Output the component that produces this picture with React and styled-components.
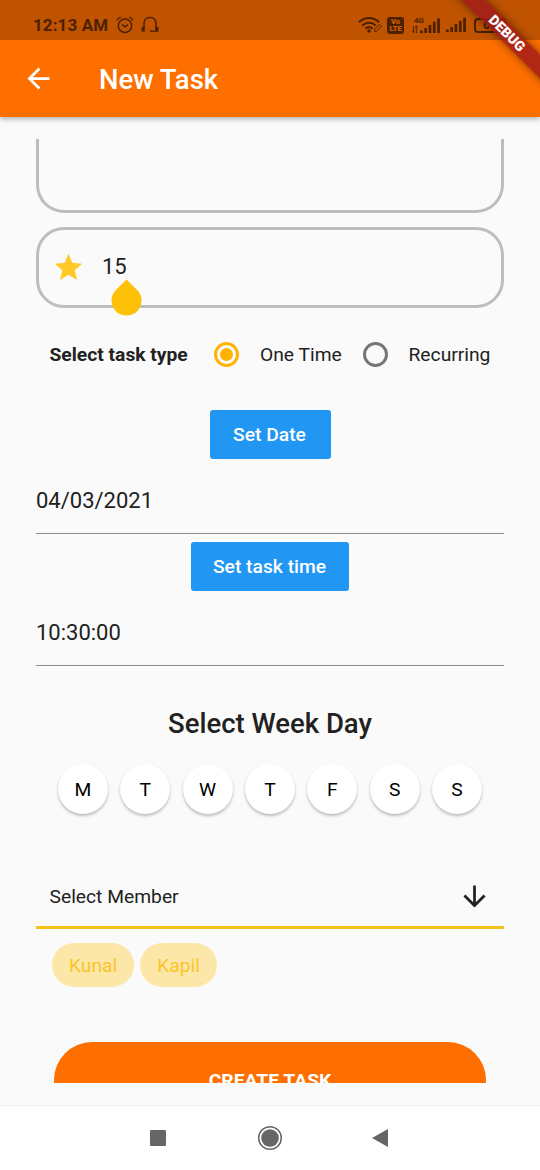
import React, { useState } from 'react'
import styled, { createGlobalStyle } from 'styled-components'
import { MdArrowBack, MdArrowDownward, MdStar } from 'react-icons/md'

const weekDays = ['M', 'T', 'W', 'T', 'F', 'S', 'S']
const members = ['Kunal', 'Kapil']
const taskTypes = ['One Time', 'Recurring']

const AlarmIcon = () => (
  <svg width='18' height='18' viewBox='0 0 18 18' fill='none' stroke='currentColor' strokeWidth='1.5'>
    <circle cx='9' cy='9.7' r='6.7' />
    <path d='M6 8.6l3 2.2 3-2.2' />
    <path d='M1 4.4Q2 2 4.8 1.1M17 4.4Q16 2 13.2 1.1' />
  </svg>
)

const HeadsetIcon = () => (
  <svg width='18' height='18' viewBox='0 0 18 18' fill='none' stroke='currentColor' strokeWidth='1.5'>
    <path d='M3 13V7.4C3 3.6 5.6 1.4 9 1.4s6 2.2 6 6V13' />
    <path d='M1.4 11v4.5M2.8 10.8v5M16.6 11v4.5M15.2 10.8v5' strokeWidth='1.7' />
    <path d='M15 15.2h-4.6' strokeWidth='1.2' />
    <circle cx='9.8' cy='15.3' r='1' fill='currentColor' stroke='none' />
  </svg>
)

const WifiIcon = () => (
  <svg width='25' height='18' viewBox='0 0 25 18' fill='none' stroke='currentColor' strokeWidth='2.1'>
    <path d='M1 6.2C7 .6 15.4 .6 21 6.2' />
    <path d='M4.3 9.5C8.3 5.9 13.7 5.9 17.7 9.5' />
    <path d='M7.5 12.6C9.7 10.7 12.3 10.7 14.5 12.6' />
    <circle cx='11' cy='15' r='1.7' fill='currentColor' stroke='none' />
    <path d='M16.5 15.5v-2.3l4.8-4.6 2 1.9-4.8 4.7z' strokeWidth='1' />
  </svg>
)

const SignalIcon = () => (
  <svg width='20' height='16' viewBox='0 0 20 16' fill='currentColor'>
    <rect x='0' y='12.5' width='2.7' height='2.5' />
    <rect x='4.3' y='10' width='2.7' height='5' />
    <rect x='8.6' y='7' width='2.7' height='8' />
    <rect x='12.9' y='3.8' width='2.7' height='11.2' />
    <rect x='17.2' y='0.5' width='2.7' height='14.5' />
  </svg>
)

const DataArrows = () => (
  <svg width='6' height='8' viewBox='0 0 6 8' fill='none' stroke='currentColor' strokeWidth='1'>
    <path d='M1.5 8V1.5M.2 5.8L1.5 7.5M4.3 8V1M3 2.5L4.3 .8 5.8 2.5' />
  </svg>
)

const App = () => {
  const [taskType, setTaskType] = useState('One Time')

  return (
    <Screen>
      <GlobalStyle />
      {/* status bar */}
      <StatusBar>
        <Clock>12:13 AM</Clock>
        <AlarmIcon />
        <HeadsetIcon />
        <StatusRight>
          <WifiIcon />
          <Volte>
            <span>Vo</span>
            <span>LTE</span>
          </Volte>
          <Network>
            <NetworkLabel>
              4G
              <DataArrows />
            </NetworkLabel>
            <SignalIcon />
          </Network>
          <SignalIcon />
          <Battery>60</Battery>
        </StatusRight>
      </StatusBar>

      {/* app bar */}
      <AppBar>
        <MdArrowBack size={33} />
        <h1>New Task</h1>
      </AppBar>

      {/* form */}
      <Form onSubmit={e => e.preventDefault()}>
        <OutlinedBox $cut />
        <OutlinedBox>
          <MdStar size={33} color='#ffca28' />
          <Points>
            15
            <CursorHandle viewBox='0 0 30 37'>
              <path d='M15 .4L25.6 11A15 15 0 1 1 4.4 11z' fill='#ffc107' />
            </CursorHandle>
          </Points>
        </OutlinedBox>

        <TypeRow>
          <strong>Select task type</strong>
          {taskTypes.map(type => (
            <TypeOption key={type} onClick={() => setTaskType(type)}>
              <Radio $checked={taskType === type} />
              {type}
            </TypeOption>
          ))}
        </TypeRow>

        <BlueButton type='button' $width='121px'>Set Date</BlueButton>
        <DateField>04/03/2021</DateField>
        <BlueButton type='button' $width='158px'>Set task time</BlueButton>
        <DateField>10:30:00</DateField>

        {/* week days */}
        <WeekTitle>Select Week Day</WeekTitle>
        <WeekRow>
          {weekDays.map((day, index) => (
            <DayButton key={index} type='button'>{day}</DayButton>
          ))}
        </WeekRow>

        {/* members */}
        <MemberSelect>
          Select Member
          <MdArrowDownward size={33} />
        </MemberSelect>
        <Chips>
          {members.map(name => (
            <Chip key={name}>{name}</Chip>
          ))}
        </Chips>

        <CreateButton type='submit'>CREATE TASK</CreateButton>
      </Form>

      {/* system navigation */}
      <NavBar>
        <svg width='16' height='16'><rect width='16' height='16' rx='1' fill='#666' /></svg>
        <svg width='26' height='26'>
          <circle cx='13' cy='13' r='11.3' fill='none' stroke='#666' strokeWidth='1.5' />
          <circle cx='13' cy='13' r='8.8' fill='#666' />
        </svg>
        <svg width='16' height='18'><path d='M0 9L16 0v18z' fill='#666' /></svg>
      </NavBar>

      <Ribbon>DEBUG</Ribbon>
    </Screen>
  )
}

const GlobalStyle = createGlobalStyle`
  * {
    box-sizing: border-box;
  }
  body {
    margin: 0;
    background: #fafafa;
  }
  button {
    font-family: inherit;
    border: none;
    padding: 0;
    cursor: pointer;
  }
  svg {
    display: block;
    flex-shrink: 0;
  }
`

const Screen = styled.div`
  position: relative;
  display: flex;
  flex-direction: column;
  width: 540px;
  height: 1170px;
  overflow: hidden;
  background: #fafafa;
  color: #212121;
  font-family: Roboto, 'Liberation Sans', sans-serif;
  font-size: 19.25px;
`

const StatusBar = styled.div`
  display: flex;
  align-items: center;
  height: 40px;
  padding: 10px 34px 0 33px;
  background: #bf5300;
  color: #4d2100;
  z-index: 1;
`

const Clock = styled.span`
  width: 75px;
  margin-right: 8px;
  font-size: 17px;
  font-weight: 700;
  letter-spacing: 0.1px;
  white-space: nowrap;

  & + svg {
    margin-right: 7px;
  }
`

const StatusRight = styled.div`
  display: flex;
  align-items: center;
  gap: 6px;
  margin-left: auto;
`

const Volte = styled.div`
  display: flex;
  flex-direction: column;
  justify-content: center;
  align-items: center;
  width: 17px;
  height: 17px;
  margin: 0 2px 0 -2px;
  border-radius: 3px;
  background: #4d2100;
  color: #d65d00;
  font-size: 7.5px;
  font-weight: 900;
  line-height: 7.5px;
`

const Network = styled.div`
  display: flex;
  align-items: flex-end;
`

const NetworkLabel = styled.div`
  display: flex;
  flex-direction: column;
  width: 8px;
  height: 17px;
  font-size: 8px;
  font-weight: 700;
  line-height: 8px;
  white-space: nowrap;
  text-indent: 2px;
`

const Battery = styled.div`
  width: 32px;
  height: 15px;
  margin-left: 2px;
  padding-left: 7px;
  border: 2px solid #4d2100;
  border-radius: 4px;
  font-size: 12px;
  font-weight: 700;
  line-height: 11px;
`

const AppBar = styled.header`
  display: flex;
  align-items: center;
  height: 77px;
  padding-left: 22px;
  background: #ff6f00;
  color: #fff;
  box-shadow: 0 2px 5px rgba(0, 0, 0, 0.3);

  h1 {
    margin: 2px 0 0 44px;
    font-size: 27.5px;
    font-weight: 500;
  }
`

const Form = styled.form`
  display: flex;
  flex-direction: column;
  height: 944px;
  margin-top: 22px;
  padding: 0 36px;
  overflow: hidden;

  & > * {
    flex-shrink: 0;
  }
`

const OutlinedBox = styled.div`
  display: flex;
  align-items: center;
  height: ${({ $cut }) => ($cut ? '74px' : '81px')};
  margin-bottom: ${({ $cut }) => ($cut ? '14px' : '0')};
  padding-left: 13px;
  border: 3px solid #bdbdbd;
  border-top-width: ${({ $cut }) => ($cut ? '0' : '3px')};
  border-radius: ${({ $cut }) => ($cut ? '0 0 28px 28px' : '28px')};
`

const Points = styled.div`
  position: relative;
  margin: -3px 0 0 17px;
  font-size: 22px;
`

const CursorHandle = styled.svg`
  position: absolute;
  top: 25px;
  left: 9px;
  width: 31px;
  height: 37px;
`

const TypeRow = styled.div`
  display: flex;
  align-items: center;
  height: 94px;
  padding: 0 0 1px 13.5px;

  strong {
    flex-shrink: 0;
    width: 164.5px;
    font-weight: 700;
  }
`

const TypeOption = styled.label`
  display: flex;
  align-items: center;
  gap: 21px;
  flex-shrink: 0;
  width: 148.5px;
  white-space: nowrap;
`

const Radio = styled.span`
  display: flex;
  align-items: center;
  justify-content: center;
  width: 25px;
  height: 25px;
  border: 3px solid ${({ $checked }) => ($checked ? '#ffb300' : '#757575')};
  border-radius: 50%;

  &::after {
    content: '';
    width: 13px;
    height: 13px;
    border-radius: 50%;
    background: ${({ $checked }) => ($checked ? '#ffb300' : 'transparent')};
  }
`

const BlueButton = styled.button`
  align-self: center;
  width: ${({ $width }) => $width};
  height: 49px;
  margin-top: 8px;
  padding-right: 1px;
  border-radius: 3px;
  background: #2196f3;
  color: #fff;
  font-size: 19.25px;
  font-weight: 500;
`

const DateField = styled.div`
  height: 75px;
  padding-top: 29px;
  border-bottom: 1px solid #8c8c8c;
  font-size: 22px;
  line-height: 26px;
`

const WeekTitle = styled.h2`
  margin: 41px 0 25px;
  font-size: 27.5px;
  font-weight: 500;
  line-height: 33px;
  text-align: center;
`

const WeekRow = styled.div`
  display: flex;
  justify-content: space-between;
  margin-top: -1px;
  padding: 0 22px;
`

const DayButton = styled.button`
  width: 50px;
  height: 50px;
  border-radius: 50%;
  background: #fff;
  color: #000;
  font-size: 19.25px;
  box-shadow: 0 2px 3px rgba(0, 0, 0, 0.25);
`

const MemberSelect = styled.div`
  display: flex;
  align-items: center;
  justify-content: space-between;
  height: 66px;
  margin-top: 49px;
  padding: 3px 13.5px 0;
  border-bottom: 3px solid #f5c21b;
`

const Chips = styled.div`
  display: flex;
  gap: 6px;
  padding: 14px 16px 0;
`

const Chip = styled.span`
  height: 44px;
  padding: 0 17px;
  border-radius: 22px;
  background: #fde7a8;
  color: #fac52a;
  line-height: 45px;
`

const CreateButton = styled.button`
  height: 77px;
  margin: 55px 18px 0;
  border-radius: 38px;
  background: #ff6f00;
  color: #fff;
  font-size: 19.25px;
  font-weight: 700;
`

const NavBar = styled.nav`
  display: flex;
  align-items: center;
  justify-content: space-between;
  height: 65px;
  margin-top: auto;
  padding: 0 152px 1px 150px;
  border-top: 1px solid #eee;
  background: #fff;

  svg:nth-child(2) {
    position: relative;
    left: 1px;
  }
`

const Ribbon = styled.div`
  position: absolute;
  top: 25px;
  right: -47px;
  width: 160px;
  height: 16.5px;
  background: rgba(160, 26, 26, 0.82);
  color: #fff;
  font-size: 14px;
  font-weight: 900;
  line-height: 16.5px;
  text-align: center;
  transform: rotate(45deg);
  box-shadow: 0 0 8px rgba(0, 0, 0, 0.5);
  z-index: 2;
`

export default App
